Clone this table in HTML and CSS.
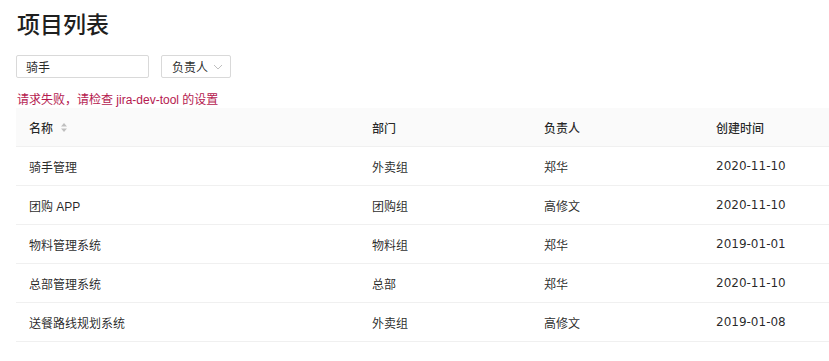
FILE: index.html
```html
<!DOCTYPE html>
<html lang="zh">
<head>
<meta charset="utf-8">
<title>项目列表</title>
<link rel="stylesheet" href="styles.css">
</head>
<body>
<div class="page">
  <h1 class="title">项目列表</h1>
  <form class="filters">
    <input class="search" type="text" value="骑手">
    <div class="select">
      <span class="select-label">负责人</span>
      <svg class="chevron" width="10" height="6" viewBox="0 0 10 6"><path d="M1 1 L5 5 L9 1" fill="none" stroke="#bfbfbf" stroke-width="1"/></svg>
    </div>
  </form>
  <div class="error">请求失败，请检查 jira-dev-tool 的设置</div>
  <table class="table">
    <colgroup>
      <col class="c1"><col class="c2"><col class="c3"><col class="c4">
    </colgroup>
    <thead>
      <tr>
        <th><span class="th-inner">名称<svg class="sorter" width="8" height="11" viewBox="0 0 8 11"><path d="M4 1 L7 4.5 L1 4.5 Z" fill="#bfbfbf"/><path d="M4 10 L7 6.5 L1 6.5 Z" fill="#bfbfbf"/></svg></span></th>
        <th>部门</th>
        <th>负责人</th>
        <th>创建时间</th>
      </tr>
    </thead>
    <tbody>
      <tr><td>骑手管理</td><td>外卖组</td><td>郑华</td><td class="date">2020-11-10</td></tr>
      <tr><td>团购 APP</td><td>团购组</td><td>高修文</td><td class="date">2020-11-10</td></tr>
      <tr><td>物料管理系统</td><td>物料组</td><td>郑华</td><td class="date">2019-01-01</td></tr>
      <tr><td>总部管理系统</td><td>总部</td><td>郑华</td><td class="date">2020-11-10</td></tr>
      <tr><td>送餐路线规划系统</td><td>外卖组</td><td>高修文</td><td class="date">2019-01-08</td></tr>
    </tbody>
  </table>
</div>
</body>
</html>
```
FILE: styles.css
```css
html, body {
  margin: 0;
  padding: 0;
  background: #fff;
  overflow: hidden;
}
body {
  font-family: "Liberation Sans", "Noto Sans CJK SC", sans-serif;
  color: rgba(0, 0, 0, 0.85);
  font-size: 12px;
}
.page {
  padding: 0 0 0 16px;
  width: 900px;
}
.title {
  margin: 7px 0 0 1px;
  font-family: "Noto Sans CJK SC Medium", "Noto Sans CJK SC", sans-serif;
  font-size: 23px;
  line-height: 32px;
  font-weight: 500;
  color: #1f1f1f;
}
.filters {
  display: flex;
  gap: 12px;
  margin-top: 16px;
}
.search {
  box-sizing: border-box;
  width: 133px;
  height: 23px;
  border: 1px solid #d9d9d9;
  border-radius: 2px;
  padding: 0 9px;
  font: inherit;
  font-size: 12px;
  color: rgba(0, 0, 0, 0.85);
  outline: none;
}
.select {
  box-sizing: border-box;
  width: 70px;
  height: 23px;
  border: 1px solid #d9d9d9;
  border-radius: 2px;
  display: flex;
  align-items: center;
  justify-content: space-between;
  padding: 0 7px 0 10px;
}
.error {
  color: #b5194f;
  margin-top: 13px;
  line-height: 18px;
  font-size: 12px;
  margin-left: 1px;
}
.table {
  border-collapse: collapse;
  table-layout: fixed;
  width: 859px;
  margin-top: -1px;
}
.c1 { width: 343px; }
.c2 { width: 172px; }
.c3 { width: 172px; }
.c4 { width: 172px; }
.table th, .table td {
  text-align: left;
  padding: 0 13px;
  height: 38px;
  border-bottom: 1px solid #f0f0f0;
  font-size: 12px;
  white-space: nowrap;
}
.table th {
  background: #fafafa;
  font-family: "Noto Sans CJK SC Medium", "Noto Sans CJK SC", sans-serif;
  font-weight: 500;
  height: 38px;
}
.table td {
  color: rgba(0, 0, 0, 0.85);
}
.table td.date {
  font-family: "DejaVu Sans", "Noto Sans CJK SC", sans-serif;
  font-size: 12px;
}
.th-inner {
  display: inline-flex;
  align-items: center;
  gap: 7px;
}
.sorter {
  display: block;
}
```
